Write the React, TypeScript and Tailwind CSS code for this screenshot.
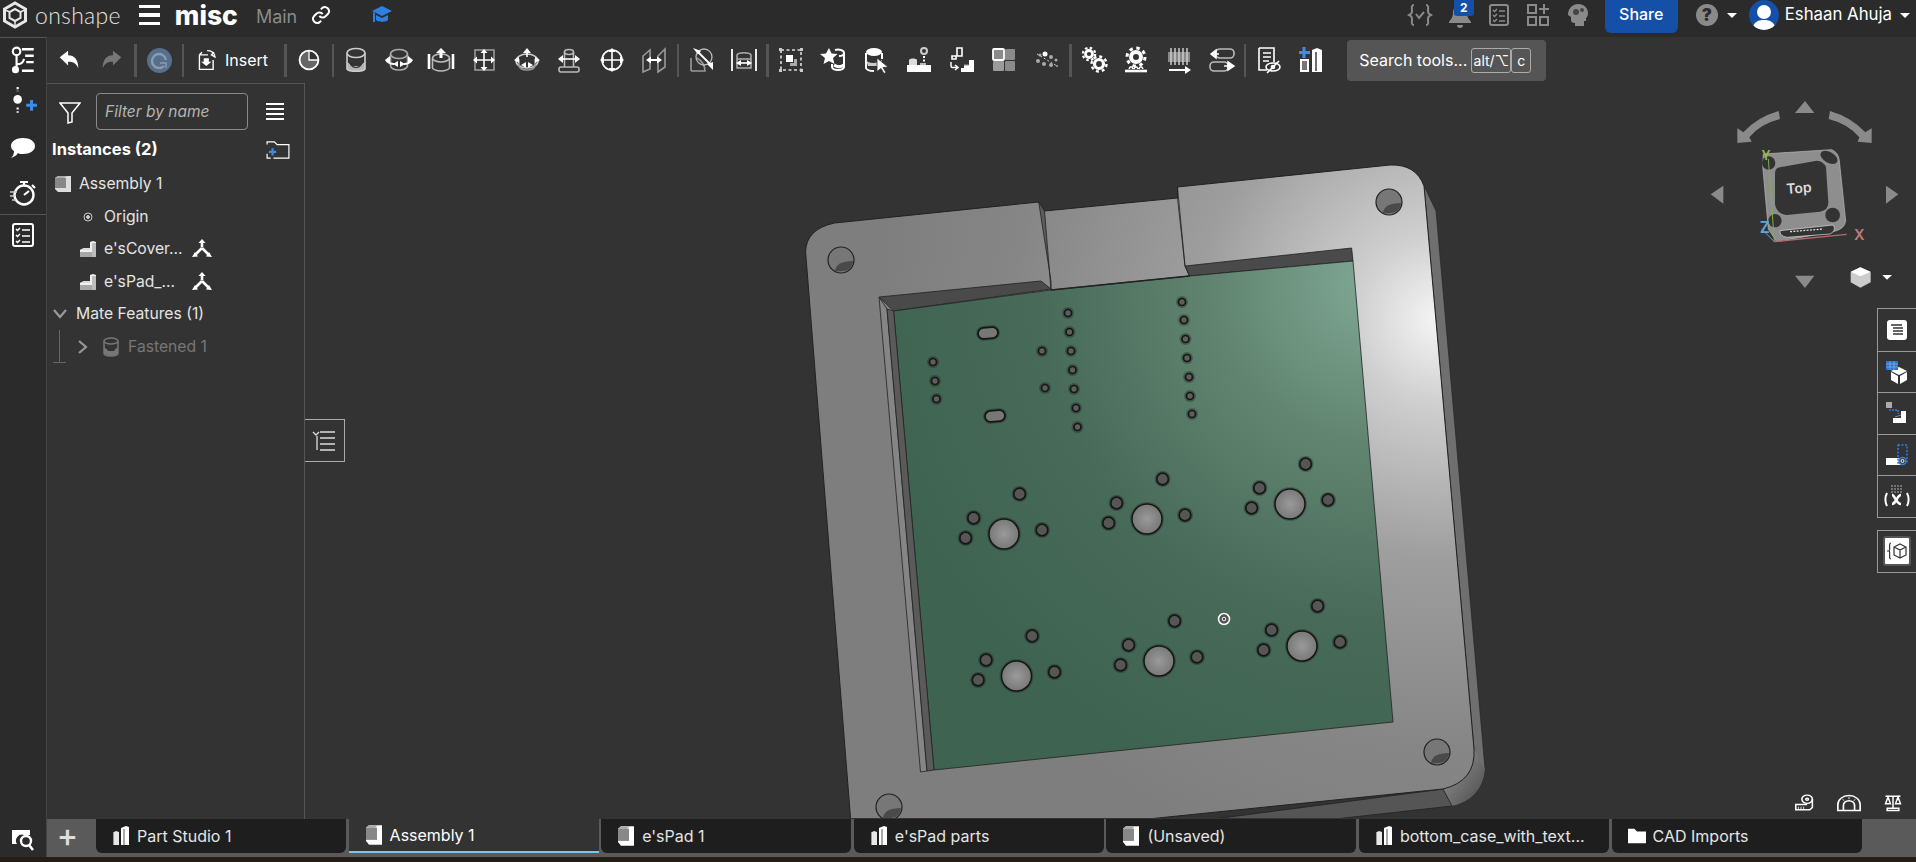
import React from "react";

const Ic = ({ children, s = 28, className = "" }: { children: React.ReactNode; s?: number; className?: string }) => (
  <svg width={s} height={s} viewBox="0 0 28 28" fill="none" stroke="white" strokeWidth="1.6" className={className}>
    {children}
  </svg>
);

const Arrows = ({ cx = 14, cy = 14, r = 9 }: { cx?: number; cy?: number; r?: number }) => (
  <g fill="white" stroke="none">
    <path d={`M${cx} ${cy - r - 2} l3.5 4 h-7z M${cx} ${cy + r + 2} l3.5 -4 h-7z M${cx - r - 2} ${cy} l4 -3.5 v7z M${cx + r + 2} ${cy} l-4 -3.5 v7z`} />
    <path d={`M${cx} ${cy - r} V${cy + r} M${cx - r} ${cy} H${cx + r}`} stroke="white" strokeWidth="1.6" />
  </g>
);

// toolbar drawings
const icons: Record<string, React.ReactNode> = {
  cyl: (
    <>
      <path d="M5 15c1 2 3 2 4 5h10c1-3 3-3 4-5v8c-2 3-16 3-18 0z" fill="#b5b5b5" stroke="none" />
      <path d="M5 15c3 1 4 3 5 5 2 2 6 2 8 0 1-2 2-4 5-5" stroke="#333" strokeWidth="1.200" />
      <ellipse cx="14" cy="7" rx="9" ry="4.500" stroke="#ccc" />
      <path d="M5 7v16c2 3 16 3 18 0V7" stroke="#ccc" />
    </>
  ),
  rev: (
    <>
      <ellipse cx="14" cy="8" rx="8.500" ry="4.500" stroke="#aaa" />
      <path d="M5.500 8v12c1 3 4 4 8.500 4s7.500-1 8.500-4V8" stroke="#aaa" />
      <path d="M1 14c2 3 5 4 8 4M27 14c-2 3-5 4-8 4" strokeWidth="1.800" />
      <path d="M0 14l5-4v8zM28 14l-5-4v8zM8 18l5-3v6zM20 18l-5-3v6z" fill="white" stroke="none" />
    </>
  ),
  sweep: (
    <>
      <ellipse cx="14" cy="12" rx="8.500" ry="4" stroke="#bbb" />
      <path d="M5.500 12v10c0 1 4 3 8.500 3s8.500-2 8.500-3V12" stroke="#bbb" />
      <path d="M14 2l5 5h-3.500v5h-3V7H9z" fill="white" stroke="none" />
      <path d="M2 8v15M26 8v15" strokeWidth="2.600" />
    </>
  ),
  move: (
    <>
      <rect x="5" y="4" width="19" height="20" stroke="#999" />
      <Arrows />
    </>
  ),
  rot: (
    <>
      <ellipse cx="14" cy="15" rx="11" ry="7" stroke="#ccc" />
      <path d="M6 13v7c1 3 5 4 8 4s7-1 8-4v-7" stroke="#999" />
      <path d="M14 2l4 5h-8zM1 14l5-3v6zM27 14l-5-3v6zM8 19l5-3v6zM20 19l-5-3v6z" fill="white" stroke="none" />
      <path d="M14 6v5" />
    </>
  ),
  shaft: (
    <>
      <ellipse cx="14" cy="6" rx="4.500" ry="2.500" stroke="#bbb" />
      <path d="M9.500 6v15M18.500 6v15" stroke="#bbb" />
      <rect x="4" y="21" width="20" height="5" rx="2" stroke="#bbb" />
      <path d="M3 13l5-4v8zM25 13l-5-4v8z" fill="white" stroke="none" />
      <path d="M8 13h12" />
    </>
  ),
  ball: (
    <>
      <circle cx="14" cy="14" r="10" />
      <Arrows r={10} />
    </>
  ),
  plane: (
    <>
      <path d="M3 10l7-6v19l-7 3zM25 3l-7 7v16l7-5z" stroke="#999" />
      <path d="M6 14l5-3.500v7zM22 14l-5-3.500v7z" fill="white" stroke="none" />
      <path d="M9 14h10" strokeWidth="2" />
    </>
  ),
  tang: (
    <>
      <path d="M3 25V12M3 25h14c0-6-3-10-8-13" stroke="#999" />
      <circle cx="16" cy="11" r="8" stroke="#bbb" strokeWidth="1.300" />
      <path d="M5 2l8 3-3 3.500zM25 24l-6-6 6-2z" fill="white" stroke="none" />
      <path d="M9 5l14 14" strokeWidth="1.800" />
    </>
  ),
  width: (
    <>
      <path d="M2 3v22M26 3v22" strokeWidth="1.800" />
      <path d="M7 9c1-3 13-3 14 0v13H7z" stroke="#aaa" />
      <path d="M7 13h14" stroke="#aaa" />
      <path d="M6 17l5-3v6zM22 17l-5-3v6z" fill="white" stroke="none" />
      <path d="M8 17h12" />
    </>
  ),
  group: (
    <>
      <rect x="4" y="4" width="20" height="20" strokeDasharray="3 2.500" stroke="#ddd" />
      <path d="M2 2h3v3H2zM23 2h3v3h-3zM2 23h3v3H2zM23 23h3v3h-3z" fill="#ccc" stroke="none" />
      <rect x="9" y="9" width="7" height="7" fill="white" stroke="none" />
      <path d="M17 13h3v7h-7v-3h4z" fill="#aaa" stroke="none" />
    </>
  ),
  star: (
    <>
      <path d="M9 2l2.500 5.500 6 .5-4.500 4 1.500 6-5.500-3-5.500 3 1.500-6L0 8l6-.5z" fill="white" stroke="none" />
      <path d="M15 4c4-1 9 0 9 3s-3 3-5 3M24 7v14c-1 4-11 4-12 0v-3" strokeWidth="2" />
      <path d="M14 19c3 2 7 2 10 0" fill="white" strokeWidth="3" />
    </>
  ),
  cylsel: (
    <>
      <ellipse cx="12" cy="6" rx="8" ry="4" fill="white" stroke="none" />
      <path d="M4 7v15c1 3 6 3 8 3M20 7v6" strokeWidth="2" />
      <path d="M4 14c2 4 12 4 16 0v4l-5 2H6z" fill="#ccc" stroke="none" />
      <path d="M15 12l11 9-5 .5 3 5-2 1-3-5-4 3z" fill="white" stroke="#333" strokeWidth=".8" />
    </>
  ),
  mate: (
    <>
      <path d="M2 19h24v7H2z" fill="white" stroke="none" />
      <path d="M4 14c1-2 7-2 8 0v5H4z" fill="#ddd" stroke="none" />
      <path d="M15 19h6v-2h-6z" fill="#bbb" stroke="none" />
      <circle cx="19" cy="5" r="3" stroke="#ccc" strokeWidth="2" />
      <path d="M19 10v6" strokeDasharray="2 1.500" strokeWidth="2" />
    </>
  ),
  parts: (
    <>
      <path d="M9 2h5v8H8v3H4v-3h5z" stroke="white" strokeWidth="1.600" />
      <path d="M3 16v4c0 1 .5 1.500 1.500 1.500H9M7 19l3 2.500-3 2.500" strokeWidth="1.500" />
      <path d="M21 14h5v12H13v-4h3v-3h5z" fill="white" stroke="none" />
      <path d="M21 19h-5" stroke="#999" strokeWidth="1" />
    </>
  ),
  grid: (
    <>
      <rect x="3" y="3" width="11" height="11" rx="1" fill="#8a8a8a" stroke="white" strokeWidth="1.800" />
      <rect x="15" y="3" width="10" height="11" rx="1" fill="#8a8a8a" stroke="none" />
      <rect x="3" y="15" width="11" height="10" rx="1" fill="#9a9a9a" stroke="none" />
      <rect x="15" y="15" width="10" height="10" rx="1" fill="#8a8a8a" stroke="none" />
    </>
  ),
  dots: (
    <g fill="#aaa" stroke="none">
      <circle cx="12" cy="8" r="2.500" fill="white" />
      <circle cx="7" cy="9" r="1.500" />
      <circle cx="18" cy="11" r="2" />
      <circle cx="23" cy="14" r="1.500" />
      <circle cx="5" cy="15" r="2" />
      <circle cx="11" cy="18" r="2" />
      <circle cx="18" cy="19" r="2" />
      <circle cx="24" cy="20" r="1" />
      <path d="M4 8l20 12" stroke="#ccc" strokeDasharray="2 2" strokeWidth="1" />
    </g>
  ),
  gears: (
    <>
      <circle cx="9" cy="8" r="3.500" strokeWidth="2.800" />
      <circle cx="9" cy="8" r="6.200" strokeWidth="2.200" strokeDasharray="2.500 2.370" />
      <circle cx="19" cy="18" r="4.500" strokeWidth="3.200" />
      <circle cx="19" cy="18" r="7.500" strokeWidth="2.400" strokeDasharray="3 2.890" />
    </>
  ),
  gearbase: (
    <>
      <circle cx="14" cy="11" r="5" strokeWidth="4" />
      <circle cx="14" cy="11" r="9" strokeWidth="3" strokeDasharray="3.500 3.570" />
      <path d="M3 25h22" strokeWidth="2.600" />
      <path d="M7 23c1-3 3-3 4 0M12 23c1-3 3-3 4 0M17 23c1-3 3-3 4 0" strokeWidth="1.500" />
    </>
  ),
  rack: (
    <>
      <rect x="3" y="6" width="22" height="10" fill="#888" stroke="none" />
      <path d="M6 2v17M10 2v17M14 2v17M18 2v17M22 2v17" stroke="#ccc" strokeWidth="1.500" />
      <path d="M4 24h17" strokeWidth="2" />
      <path d="M26 24l-6-4v8z" fill="white" stroke="none" />
    </>
  ),
  slide: (
    <>
      <rect x="8" y="3" width="18" height="9" rx="4" stroke="#bbb" />
      <rect x="2" y="16" width="18" height="9" rx="4" stroke="#bbb" />
      <path d="M3 8h8M3 8l5-4v8zM16 20h8M26 20l-6-4v8z" fill="white" stroke="white" strokeWidth="1.500" />
    </>
  ),
  report: (
    <>
      <path d="M4 2h15v14M4 2v22h8" />
      <path d="M8 7h8M8 11h8M8 15h6" />
      <ellipse cx="18" cy="21" rx="7" ry="4" />
      <circle cx="18" cy="21" r="1.500" fill="white" />
      <path d="M12 27L24 15" />
    </>
  ),
  addpart: (
    <>
      <path d="M7 1v11M2 6.500h11" stroke="#3b8de8" strokeWidth="3" />
      <path d="M3 13h9v13H3z" fill="white" stroke="none" />
      <rect x="5" y="15" width="5" height="9" fill="#777" stroke="none" />
      <path d="M15 4l5-2 5 2v22H15z" fill="white" stroke="none" />
      <path d="M19 6v19" stroke="#333" strokeWidth="1.400" />
    </>
  ),
};

const Sep = () => <div className="mx-[1px] h-[33px] w-[2.500px] shrink-0 bg-[#555]" />;

const ToolBtn = ({ name }: { name: string }) => (
  <div className="flex h-[46px] w-[42.600px] shrink-0 items-center justify-center">
    <Ic>{icons[name]}</Ic>
  </div>
);

const Toolbar = () => (
  <div className="flex h-[46px] items-center bg-[#333]">
    <div className="flex h-[46px] w-[43px] items-center justify-center">
      <Ic s={26}>
        <path d="M4 11l9-7v5c7 0 11 5 11 14-2-5-5-7-11-7v4z" fill="white" stroke="none" />
      </Ic>
    </div>
    <div className="flex h-[46px] w-[43px] items-center justify-center">
      <Ic s={26}>
        <path d="M24 11l-9-7v5C8 9 4 14 4 23c2-5 5-7 11-7v4z" fill="#777" stroke="none" />
      </Ic>
    </div>
    <Sep />
    <div className="flex h-[46px] w-[43px] items-center justify-center">
      <div className="flex h-[25px] w-[25px] items-center justify-center rounded-full bg-[#566f8d]">
        <svg width="17" height="17" viewBox="0 0 17 17" fill="none" stroke="#8c9bad" strokeWidth="2.400">
          <path d="M13 14A7 7 0 1 1 15 8" />
          <path d="M9 11h6v5" strokeWidth="1.500" />
        </svg>
      </div>
    </div>
    <Sep />
    <div className="flex h-[46px] w-[98px] items-center">
      <div className="ml-[11px] mr-[5px]">
        <Ic s={24}>
          <path d="M4 8h10M4 8v17h16V14M4 8l3-3" />
          <path d="M13 3c5 0 8 2 9 6M23 11l-5-3 3-3" strokeWidth="1.600" />
          <path d="M9 12h6v4h3l-6 5-6-5h3z" fill="white" stroke="none" />
        </Ic>
      </div>
      <span className="text-[16px] font-normal text-white">Insert</span>
    </div>
    <Sep />
    <div className="flex h-[46px] w-[43px] items-center justify-center">
      <Ic s={24}>
        <path d="M14 3A11 11 0 1 0 25 14H14z" fill="#666" stroke="none" />
        <circle cx="14" cy="14" r="11" strokeWidth="2.200" />
        <path d="M14 3v11h11" strokeWidth="1.500" />
      </Ic>
    </div>
    <Sep />
    {["cyl", "rev", "sweep", "move", "rot", "shaft", "ball", "plane"].map((n) => (
      <ToolBtn key={n} name={n} />
    ))}
    <Sep />
    {["tang", "width"].map((n) => (
      <ToolBtn key={n} name={n} />
    ))}
    <Sep />
    {["group", "star", "cylsel", "mate", "parts", "grid", "dots"].map((n) => (
      <ToolBtn key={n} name={n} />
    ))}
    <Sep />
    {["gears", "gearbase", "rack", "slide"].map((n) => (
      <ToolBtn key={n} name={n} />
    ))}
    <Sep />
    {["report", "addpart"].map((n) => (
      <ToolBtn key={n} name={n} />
    ))}
    <div className="ml-[14.600px] flex h-[41px] w-[199px] items-center rounded-[4px] bg-[#555] pl-[12px] text-[16px] text-white">
      <span>Search tools...</span>
      <span className="ml-[4px] flex h-[25px] w-[40px] items-center justify-center rounded-[3px] border border-[#aaa] text-[14px]">alt/⌥</span>
      <span className="flex h-[25px] w-[20px] items-center justify-center rounded-[3px] border border-[#aaa] text-[14px]">c</span>
    </div>
  </div>
);

const TopBar = () => (
  <div className="flex h-[37px] shrink-0 items-center bg-[#2b2b2b] pb-[7px]">
    <svg width="26" height="28" viewBox="0 0 26 28" fill="none" stroke="#e8e8e8" className="ml-[2px]">
      <path d="M13 2l10.500 6v12L13 26 2.500 20V8z" strokeWidth="3" />
      <path d="M13 8l5.500 3v6L13 20l-5.500-3v-6z" strokeWidth="2" />
      <path d="M3 9l5 2M23 9l-5 2M13 26v-6" strokeWidth="1.500" />
    </svg>
    <span className="ml-[7px] text-[23px] font-light leading-none tracking-[.3px] text-[#e2e2e2] font-[Lato,sans-serif]">onshape</span>
    <div className="ml-[18px] flex w-[21px] flex-col gap-[5px]">
      <div className="h-[3.500px] bg-white" />
      <div className="h-[3.500px] bg-white" />
      <div className="h-[3.500px] bg-white" />
    </div>
    <span className="ml-[15px] text-[26.500px] font-extrabold leading-none text-white">misc</span>
    <span className="ml-[18px] mt-[2px] text-[18px] text-[#8a8a8a]">Main</span>
    <svg width="20" height="20" viewBox="0 0 24 24" fill="none" stroke="white" strokeWidth="2.400" className="ml-[14px]">
      <path d="M10 13a5 5 0 0 0 7.500.5l3-3a5 5 0 0 0-7-7l-1.700 1.700" />
      <path d="M14 11a5 5 0 0 0-7.500-.5l-3 3a5 5 0 0 0 7 7l1.700-1.700" />
    </svg>
    <svg width="22" height="20" viewBox="0 0 22 20" fill="#2f7fe0" className="ml-[40px]">
      <path d="M11 1L1 6l10 5 10-5z" />
      <path d="M5 10v5c2 2 3 1 6 2 3-1 4 0 6-2v-5l-6 3zM2 7v10h2V8z" />
    </svg>

    <div className="ml-auto flex h-[30px] items-center">
      <svg width="26" height="26" viewBox="0 0 26 26" fill="none" stroke="#8a8a8a" strokeWidth="2">
        <path d="M7 3C4 3 5 6 5 9s-1 3-3 4c2 1 3 1 3 4s-1 6 2 6M19 3c3 0 2 3 2 6s1 3 3 4c-2 1-3 1-3 4s1 6-2 6" />
        <path d="M9 12l3 4 5-6" />
      </svg>
      <div className="relative ml-[14px] h-[26px] w-[26px]">
        <svg width="26" height="26" viewBox="0 0 26 26" fill="#8a8a8a">
          <path d="M13 3c-5 0-7 4-7 8 0 5-3 7-4 9v1h22v-1c-1-2-4-4-4-9 0-4-2-8-7-8zM10 23a3 3 0 0 0 6 0z" />
        </svg>
        <div className="absolute -top-[2px] left-[7px] flex h-[16px] w-[20px] items-center justify-center rounded-b-[3px] bg-[#1450a8] text-[12px] font-bold leading-none text-white">2</div>
      </div>
      <svg width="24" height="24" viewBox="0 0 24 24" fill="none" stroke="#8a8a8a" strokeWidth="2" className="ml-[14px]">
        <rect x="3" y="2" width="18" height="20" rx="2" />
        <path d="M6 7l1.500 1.500L10 6M6 12l1.500 1.500L10 11M6 17l1.500 1.500L10 16M12 8h6M12 13h6M12 18h6" strokeWidth="1.500" />
      </svg>
      <svg width="24" height="24" viewBox="0 0 24 24" fill="none" stroke="#8a8a8a" strokeWidth="2" className="ml-[15px]">
        <rect x="2" y="2" width="8" height="8" />
        <rect x="2" y="14" width="8" height="8" />
        <rect x="14" y="14" width="8" height="8" />
        <path d="M18 1v10M13 6h10" />
      </svg>
      <svg width="22" height="24" viewBox="0 0 22 24" fill="#8a8a8a" className="ml-[17px]">
        <path d="M11 1c6 0 10 4 10 9 0 3-1 4-2 5v3h-2v5H8v-3c-3 0-4-1-4-3v-3L1 12C1 6 5 1 11 1z" />
        <circle cx="9" cy="9" r="3" fill="#444" />
        <circle cx="15" cy="7" r="2" fill="#444" />
      </svg>
      <div className="ml-[16px] flex h-[33px] w-[73px] items-center justify-center self-start rounded-b-[6px] bg-[#1450a8] pb-[6px] text-[16px] font-medium text-white">Share</div>
      <div className="ml-[18px] flex h-[22px] w-[22px] items-center justify-center rounded-full bg-[#8a8a8a] text-[17px] font-black leading-none text-[#2b2b2b]">?</div>
      <div className="ml-[9px] h-0 w-0 border-x-[5px] border-t-[5px] border-x-transparent border-t-white" />
      <div className="relative ml-[12px] h-[30px] w-[30px] overflow-hidden rounded-full bg-[#1450a8]">
        <div className="absolute left-[8px] top-[5px] h-[14px] w-[14px] rounded-full bg-white" />
        <div className="absolute left-[3px] top-[20px] h-[14px] w-[24px] rounded-t-[10px] bg-white" />
      </div>
      <span className="ml-[6px] text-[16.800px] font-normal text-white">Eshaan Ahuja</span>
      <div className="ml-[8px] mr-[6px] h-0 w-0 border-x-[5px] border-t-[5px] border-x-transparent border-t-white" />
    </div>
  </div>
);

const Rail = () => (
  <div className="flex w-[46px] shrink-0 flex-col items-center border-t border-[#555] bg-[#2b2b2b]">
    <div className="mt-[7px] h-[28px]">
      <Ic s={30}>
        <circle cx="8" cy="6" r="3.500" strokeWidth="2" />
        <circle cx="7" cy="23" r="2.500" fill="white" />
        <path d="M8 10v11M8 18c4 0 6-1 7-5" strokeWidth="2" />
        <path d="M13 4h11M16 10h8M17 16h7M13 24h11" strokeWidth="2.200" />
      </Ic>
    </div>
    <div className="mt-[13px] h-[30px]">
      <Ic s={30}>
        <path d="M9 1v4M9 20v5" strokeWidth="2" strokeDasharray="2 1.500" />
        <circle cx="9" cy="12.500" r="4" fill="white" stroke="none" />
        <path d="M22 13v10M17 18h10" stroke="#3b8de8" strokeWidth="2.800" />
      </Ic>
    </div>
    <div className="mt-[19px] h-[28px]">
      <svg width="26" height="26" viewBox="0 0 26 26" fill="white">
        <path d="M13 3c7 0 12 3.500 12 8s-5 8-12 8c-2 0-4 0-5-1-1 2-4 4-7 5 2-2 3-4 3-7-2-1-3-3-3-5 0-4.500 5-8 12-8z" />
      </svg>
    </div>
    <div className="mt-[16px] h-[28px]">
      <Ic s={28}>
        <circle cx="15" cy="16" r="9.500" strokeWidth="2.400" />
        <path d="M11 3h8M15 3v3M23 6l3 3M15 16l5-4" strokeWidth="2.200" />
        <path d="M1 13h7M1 17h5M3 21h4" stroke="#ccc" strokeWidth="1.600" />
      </Ic>
    </div>
    <div className="mt-[7px] h-px w-full bg-[#555]" />
    <div className="mt-[7px] h-[28px]">
      <svg width="24" height="26" viewBox="0 0 24 26" fill="none" stroke="white" strokeWidth="2">
        <rect x="2" y="2" width="20" height="22" rx="2" />
        <path d="M5 7l1.500 1.500L9 6M5 13l1.500 1.500L9 12M5 19l1.500 1.500L9 18M11 8h8M11 14h8M11 20h8" strokeWidth="1.500" />
      </svg>
    </div>
    <div className="mt-auto mb-[5px]">
      <svg width="28" height="26" viewBox="0 0 28 26" fill="none" stroke="white">
        <path d="M3 4h18v5h-6a6 6 0 0 0-7 9H3z" fill="white" stroke="none" />
        <circle cx="17" cy="15" r="5" strokeWidth="2.400" />
        <path d="M20 19l4 5" strokeWidth="2.600" />
      </svg>
    </div>
  </div>
);

// tab icon: two upright bars
const PartIc = () => (
  <svg width="18" height="22" viewBox="0 0 18 22" stroke="none">
    <path d="M9 3l5-2 3 1v18H9z" fill="white" />
    <path d="M12 4v16" stroke="#555" strokeWidth="1" />
    <path d="M2 7l2-1 3 1v13H2z" fill="#e8e8e8" />
    <path d="M1 7h1v13H1z" fill="#999" />
  </svg>
);

// tree icon: L shaped part
const LPartIc = () => (
  <svg width="18" height="18" viewBox="0 0 18 18" stroke="none">
    <path d="M11 2l3-1 3 1v15H1V10l4-2h6z" fill="#f0f0f0" />
    <path d="M13 3h4v14h-4z" fill="#bdbdbd" />
    <path d="M1 12h12v5H1z" fill="#a8a8a8" />
    <path d="M5 8h6v2H1z" fill="#dcdcdc" />
  </svg>
);

const AsmIc = ({ color = "#ddd", h = 18 }: { color?: string; h?: number }) => (
  <svg width="18" height={h} viewBox="0 0 18 18" stroke="none" preserveAspectRatio="none">
    <path d="M4 1h13v16H4L1 14V3z" fill={color} />
    <path d="M1 3l3-2h9l-3 2z" fill="#aaa" />
    <rect x="1" y="3" width="11" height="10" fill="#888" />
  </svg>
);

const Row = ({ pl, children }: { pl: number; children: React.ReactNode }) => (
  <div className="flex h-[32.500px] items-center text-[15.700px] text-[#e4e4e4]" style={{ paddingLeft: pl }}>
    {children}
  </div>
);

const MateIc = () => (
  <svg width="22" height="22" viewBox="0 0 22 22" fill="white" stroke="white" className="ml-[12px]">
    <path d="M11 9V3M11 10l-7 7M11 10l7 7" strokeWidth="2.600" fill="none" />
    <path d="M11 1l3.500 4h-7zM1 19l6-.5-3-4.500zM21 19l-6-.5 3-4.500z" stroke="none" />
  </svg>
);

const Panel = () => (
  <div className="relative flex w-[258px] shrink-0 flex-col border-t border-r border-[#555] bg-[#333]">
    <div className="mt-[9px] flex h-[37px] items-center">
      <svg width="22" height="24" viewBox="0 0 22 24" fill="none" stroke="white" strokeWidth="1.500" className="ml-[12px]">
        <path d="M1 3h20l-8 10v9l-4 1V13z" />
      </svg>
      <div className="ml-[15px] flex h-[37px] w-[152px] items-center rounded-[4px] border border-[#8a8a8a] pl-[8px] text-[15.500px] italic text-[#b5b5b5]">Filter by name</div>
      <div className="ml-[18px] flex w-[18px] flex-col gap-[2.500px]">
        <div className="h-[2.500px] bg-white" />
        <div className="h-[2.500px] bg-white" />
        <div className="h-[2.500px] bg-white" />
        <div className="h-[2.500px] bg-white" />
      </div>
    </div>
    <div className="mt-[4px] flex h-[30px] items-center pl-[5px] text-[16.500px] font-bold text-white">
      <span>Instances (2)</span>
      <svg width="24" height="20" viewBox="0 0 26 22" fill="none" stroke="white" strokeWidth="1.300" className="ml-[108px] mt-[2px]">
        <path d="M1 5V2h8l3 3h13v15H8M1 15v5h4" />
        <path d="M7 9v8M3 13h8" stroke="#3b8de8" strokeWidth="2.400" />
      </svg>
    </div>
    <div className="mt-[4px]">
      <Row pl={7}>
        <AsmIc />
        <span className="ml-[7px]">Assembly 1</span>
      </Row>
      <Row pl={36}>
        <svg width="10" height="10" viewBox="0 0 10 10" fill="none" stroke="#ccc">
          <circle cx="5" cy="5" r="4" />
          <circle cx="5" cy="5" r="1.500" fill="#ccc" />
        </svg>
        <span className="ml-[11px]">Origin</span>
      </Row>
      {["e'sCover...", "e'sPad_..."].map((n) => (
        <Row pl={32} key={n}>
          <LPartIc />
          <span className="ml-[7px] w-[75px]">{n}</span>
          <MateIc />
        </Row>
      ))}
      <Row pl={5}>
        <svg width="16" height="10" viewBox="0 0 16 10" fill="none" stroke="#999" strokeWidth="2.200">
          <path d="M2 1l6 7 6-7" />
        </svg>
        <span className="ml-[8px]">Mate Features (1)</span>
      </Row>
      <Row pl={31}>
        <svg width="10" height="16" viewBox="0 0 10 16" fill="none" stroke="#999" strokeWidth="2.200">
          <path d="M1 2l7 6-7 6" />
        </svg>
        <svg width="18" height="20" viewBox="0 0 18 20" fill="none" stroke="#777" strokeWidth="1.500" className="ml-[14px]">
          <ellipse cx="9" cy="4" rx="7" ry="3" />
          <path d="M2 4v12c0 2 3 3 7 3s7-1 7-3V4" />
          <path d="M2 10c2 2 3 2 4 4h6c1-2 2-2 4-4v7l-7 2-7-2z" fill="#777" stroke="none" />
        </svg>
        <span className="ml-[8px] text-[#777]">Fastened 1</span>
      </Row>
    </div>
    <div className="absolute left-[12px] top-[246px] h-[32px] w-px bg-[#666]" />
    <div className="absolute left-[6px] top-[278px] h-px w-[13px] bg-[#666]" />
  </div>
);

const sideCell = "flex h-[41.500px] items-center justify-center";

const SidePanel = () => (
  <div className="absolute right-0 top-[225px] w-[39px]">
    <div className="border-y border-l border-[#999]">
      <div className={sideCell}>
        <svg width="20" height="20" viewBox="0 0 20 20" stroke="#333">
          <rect width="20" height="20" rx="3" fill="white" stroke="none" />
          <path d="M4 5h11M6 8h10M6 11h10M6 14h10" strokeWidth="1.500" fill="none" />
        </svg>
      </div>
      <div className={`${sideCell} border-t border-[#999]`}>
        <svg width="24" height="24" viewBox="0 0 24 24" fill="white">
          <path d="M14 7l8 4-8 4-8-4zM6 12l7 4v8l-7-4zM22 12l-7 4v8l7-4z" />
          <rect x="1" y="1" width="12" height="9" fill="#2f6fd0" />
          <path d="M1 4h12M1 7h12M5 1v9M9 1v9" stroke="#9cc" strokeWidth=".6" />
        </svg>
      </div>
      <div className={`${sideCell} border-t border-[#999]`}>
        <svg width="24" height="24" viewBox="0 0 24 24" fill="none">
          <rect x="1" y="1" width="6" height="6" fill="#aaa" />
          <path d="M4 9h9v4" stroke="#2f7fe0" strokeWidth="1.500" strokeDasharray="2 1" />
          <path d="M16 10h5v12H8v-5h8z" fill="white" />
          <path d="M10 16l6-2" stroke="#888" />
        </svg>
      </div>
      <div className={`${sideCell} border-t border-[#999]`}>
        <svg width="24" height="24" viewBox="0 0 24 24" fill="none">
          <rect x="1" y="15" width="15" height="7" fill="white" />
          <rect x="13" y="2" width="9" height="18" stroke="#2f7fe0" strokeDasharray="2 1.500" strokeWidth="1.500" />
          <circle cx="17.500" cy="18" r="3.500" stroke="#2f7fe0" strokeWidth="1.500" fill="#333" />
          <circle cx="17.500" cy="18" r="1.500" stroke="white" />
        </svg>
      </div>
      <div className={`${sideCell} border-t border-[#999]`}>
        <svg width="26" height="24" viewBox="0 0 26 24" fill="none" stroke="white">
          <path d="M3 9c-2 4-2 9 0 13M23 9c2 4 2 9 0 13" strokeWidth="2" />
          <path d="M8 11c3 0 4 9 9 9M17 11c-4 0-5 9-9 9" strokeWidth="2.600" />
          <path d="M7 2h12M7 5h12M7 8h12" stroke="#888" strokeWidth="1.600" strokeDasharray="2 1" />
        </svg>
      </div>
    </div>
    <div className="mt-[12px] flex h-[43px] items-center justify-center border-y border-l border-[#999]">
      <div className="flex h-[30px] w-[28px] items-center justify-center rounded-[3px] border-2 border-[#555] bg-white">
        <svg width="22" height="22" viewBox="0 0 22 22" fill="none" stroke="#333" strokeWidth="1.200">
          <path d="M14 4l6 3v8l-6 3-6-3V7zM8 7l6 3 6-3M14 10v8" />
          <path d="M5 3C2 3 5 10 3 11c2 1-1 8 2 8M1 11h3" />
        </svg>
      </div>
    </div>
  </div>
);

const big = [
  [1004, 535],
  [1147, 520],
  [1290, 505],
  [1016.5, 677],
  [1159, 662],
  [1302, 647],
];
const off = [
  [15.6, -40],
  [-30.4, -16],
  [-38.4, 4],
  [38, -4],
];
const tiny = [
  [933, 363], [935, 382], [936.5, 400], [1042, 352], [1045, 389],
  [1068, 314], [1069.5, 333], [1071, 352], [1072.5, 371], [1074, 390], [1076, 409], [1077.5, 428],
  [1182, 303], [1184, 321], [1185.5, 340], [1187, 359], [1189, 378], [1190, 397], [1192, 415],
];
const corners = [
  [841, 261],
  [1389, 203],
  [1437, 753],
  [889, 808],
];

const Model = () => (
  <svg width="1611" height="735" viewBox="305 84 1611 735" className="absolute left-0 top-0">
    <defs>
      <radialGradient id="fr" gradientUnits="userSpaceOnUse" cx="1440" cy="320" r="570">
        <stop offset="0" stopColor="#f6f6f6" />
        <stop offset=".15" stopColor="#cfcfcf" />
        <stop offset=".42" stopColor="#9e9e9e" />
        <stop offset=".75" stopColor="#868686" />
        <stop offset="1" stopColor="#7e7e7e" />
      </radialGradient>
      <radialGradient id="gr" gradientUnits="userSpaceOnUse" cx="1375" cy="285" r="520">
        <stop offset="0" stopColor="#80a895" />
        <stop offset=".3" stopColor="#618571" />
        <stop offset=".65" stopColor="#476b58" />
        <stop offset="1" stopColor="#3f6351" />
      </radialGradient>
      <radialGradient id="bh" cx=".5" cy=".5" r=".6">
        <stop offset="0" stopColor="#9a9a9a" />
        <stop offset="1" stopColor="#727272" />
      </radialGradient>
      <linearGradient id="cr" x1="0" y1="0" x2="1" y2="1">
        <stop offset="0" stopColor="#999" />
        <stop offset="1" stopColor="#4a4a4a" />
      </linearGradient>
    </defs>
    {/* side faces */}
    <path d="M1424 187L1436 212 1485 770Q1482 800 1452 807L1443 790Q1476 782 1474 750z" fill="#6f6f6f" stroke="#222" strokeWidth=".6" />
    <path d="M1474 750Q1476 782 1443 790L1452 807Q1482 800 1485 770z" fill="url(#cr)" />
    <path d="M1443 790L1452 807 1200 835 1100 835z" fill="#555" stroke="#222" strokeWidth=".8" />
    {/* top face */}
    <path
      d="M805.600 253Q806 230 834.600 224L1038.700 203 1044.500 212 1177.500 199 1177.500 188 1390 166Q1416 165 1424 187L1474 750Q1476 782 1443 790L853 850z"
      fill="url(#fr)"
      stroke="#222"
      strokeWidth="1"
    />
    {/* window */}
    <path d="M879 298L1041 282 1051 290 893.600 312z" fill="#4a4a4a" stroke="#222" strokeWidth=".8" />
    <path d="M1185 267L1351.600 249 1353 262 1189.500 277z" fill="#4a4a4a" stroke="#222" strokeWidth=".8" />
    <path d="M893.600 312L1051 291 1189.500 277 1353 262 1393 723 934 771z" fill="url(#gr)" stroke="#222" strokeWidth=".8" />
    <path d="M879 298L887 310 927 772 920.500 773z" fill="#858585" stroke="#222" strokeWidth=".8" />
    <path d="M887 310L893.600 312 934 771 927 772z" fill="#5a5a5a" stroke="#222" strokeWidth=".8" />
    {/* notch */}
    <path d="M1038.700 203L1044.500 212 1051 291 1051 282z" fill="#5c5c5c" stroke="#222" strokeWidth=".8" />
    <path d="M1177.500 188L1185 267 1189.500 277M1177.500 199L1185 267" fill="none" stroke="#222" strokeWidth=".8" />
    <path d="M1051 291L1189.500 277" fill="none" stroke="#222" strokeWidth="1.400" />
    {/* corner holes */}
    {corners.map(([x, y]) => (
      <g key={x}>
        <circle cx={x} cy={y} r="13" fill="#777" stroke="#222" strokeWidth="1.200" />
        <path d={`M${x - 6} ${y + 11}Q${x - 5} ${y + 1} ${x + 12} ${y + 1}Q${x + 11} ${y + 13} ${x - 6} ${y + 11}z`} fill="#4a4a4a" />
      </g>
    ))}
    {/* pcb holes, each with a soft dark halo */}
    {tiny.map(([x, y]) => (
      <g key={`${x}-${y}`}>
        <circle cx={x} cy={y} r="6" fill="#111" opacity=".3" />
        <circle cx={x} cy={y} r="3.500" fill="#5e5e5e" stroke="#161616" strokeWidth="1.700" />
      </g>
    ))}
    {[
      [988, 334],
      [995, 417],
    ].map(([x, y]) => (
      <g key={x} transform={`rotate(-5 ${x} ${y})`}>
        <rect x={x - 12} y={y - 7.500} width="24" height="15" rx="7.500" fill="#111" opacity=".3" />
        <rect x={x - 10} y={y - 5.500} width="20" height="11" rx="5.500" fill="#777" stroke="#161616" strokeWidth="1.800" />
      </g>
    ))}
    {big.map(([x, y]) => (
      <g key={x}>
        <circle cx={x} cy={y} r="17" fill="#111" opacity=".25" />
        <circle cx={x} cy={y} r="15" fill="url(#bh)" stroke="#161616" strokeWidth="1.500" />
        {off.map(([a, b]) => (
          <g key={a}>
            <circle cx={x + a} cy={y + b} r="8" fill="#111" opacity=".3" />
            <circle cx={x + a} cy={y + b} r="5.800" fill="#565656" stroke="#161616" strokeWidth="1.700" />
          </g>
        ))}
      </g>
    ))}
    <circle cx="1224" cy="620" r="5.500" fill="#555" stroke="white" strokeWidth="1.500" />
    <circle cx="1224" cy="620" r="1.800" fill="none" stroke="#eee" />
  </svg>
);

const NavCube = () => (
  <svg width="236" height="210" viewBox="0 0 708 630" className="absolute right-0 top-[6px]">
    <g fill="#8a8a8a">
      <path d="M345 72L375 36 403 72zM92 316L130 290V344zM655 316L618 290V344zM345 560H403L375 597z" />
      <path d="M296 66L300 90Q240 105 208 145L215 158 172 162 172 118 190 130Q230 85 296 66z" />
      <path d="M450 66L446 90Q505 105 538 145L533 158 575 162V118L556 130Q515 85 450 66z" />
    </g>
    <path d="M250 195L455 182Q475 190 478 215L497 395Q495 420 460 428L290 458 265 420 248 230z" fill="#8e8e8e" stroke="#bbb" strokeWidth="2" />
    <path d="M300 235Q285 235 285 255L285 345Q290 375 320 378L420 368Q445 365 445 340L438 235Q430 215 410 215z" fill="#333" />
    <circle cx="266" cy="222" r="20" fill="#333" />
    <ellipse cx="447" cy="205" rx="28" ry="16" fill="#333" transform="rotate(30 447 205)" />
    <circle cx="285" cy="395" r="20" fill="#333" />
    <circle cx="458" cy="378" r="22" fill="#333" />
    <path d="M300 425L460 408Q470 425 450 435L320 445Q298 440 300 425z" fill="#333" stroke="#ddd" strokeWidth="2" />
    <path d="M330 428L430 420" stroke="#ddd" strokeWidth="4" strokeDasharray="6 4" />
    <text x="358" y="312" fill="#ddd" fontSize="42" fontWeight="600" textAnchor="middle" transform="rotate(-5 358 312)">Top</text>
    <path d="M265 210L283 458" stroke="#7fb04f" strokeWidth="3" />
    <path d="M283 458L500 436" stroke="#b06a6a" strokeWidth="4" />
    <path d="M283 458L245 420" stroke="#5fa8d8" strokeWidth="3" />
    <text x="258" y="212" fill="#8fbf4f" fontSize="38" fontWeight="600" textAnchor="middle">Y</text>
    <text x="254" y="432" fill="#5fa8d8" fontSize="46" fontWeight="600" textAnchor="middle">Z</text>
    <text x="538" y="452" fill="#c07a7a" fontSize="44" fontWeight="600" textAnchor="middle">X</text>
    <path d="M541 535L572 550V580L541 596 512 580V550z" fill="#ccc" />
    <path d="M541 535L572 548 541 562 512 548z" fill="white" />
    <path d="M607 558H636L621 572z" fill="white" />
  </svg>
);

const BottomTools = () => (
  <div className="absolute bottom-[7px] right-[13px] flex items-center gap-[21px]">
    <svg width="21" height="18" viewBox="0 0 24 24" fill="none" stroke="white" strokeWidth="1.800" preserveAspectRatio="none">
      <ellipse cx="15" cy="7" rx="6" ry="5.500" />
      <circle cx="15" cy="7" r="1.500" />
      <path d="M21 7v11l-3 3H2v-7h13" />
      <path d="M5 17v4M8 17v4M11 17v4" strokeWidth="1" />
    </svg>
    <svg width="26" height="18" viewBox="0 0 28 24" fill="none" stroke="white" strokeWidth="1.800" preserveAspectRatio="none">
      <path d="M2 22V14a12 12 0 0 1 24 0v8z" />
      <path d="M8 22v-7a6 6 0 0 1 12 0v7" />
      <path d="M14 4v3M7 7l2 2M21 7l-2 2" strokeWidth="1" />
    </svg>
    <svg width="20" height="18" viewBox="0 0 24 24" fill="none" stroke="white" strokeWidth="1.800" preserveAspectRatio="none">
      <path d="M3 3h18M12 3v15M5 19h14v3H5z" />
      <path d="M6 4L3 13h6zM18 4l-3 9h6z" />
    </svg>
  </div>
);

const Tab = ({ label, icon, active }: { label: string; icon: React.ReactNode; active?: boolean }) => (
  <div
    className={
      active
        ? "flex h-[34px] w-[250px] shrink-0 items-center border-b-2 border-[#7fc4ef] bg-[#333] pl-[16px] text-[16px] text-white"
        : "flex h-[34px] w-[250px] shrink-0 items-center rounded-b-[6px] bg-[#1e1e1e] pl-[16px] text-[16px] text-[#e4e4e4]"
    }
  >
    <span className="mr-[7px] flex w-[18px] justify-center">{icon}</span>
    {label}
  </div>
);

const FolderIc = () => (
  <svg width="20" height="16" viewBox="0 0 20 16" fill="white">
    <path d="M0 0h7l3 3h10v13H0z" />
  </svg>
);

export default function App() {
  return (
    <div className="flex h-[862px] w-[1916px] flex-col overflow-hidden bg-[#2a1f1a] font-[Inter,sans-serif]">
      <TopBar />
      <div className="flex h-[820px] shrink-0">
        <Rail />
        <div className="flex w-[1870px] flex-col border-l border-[#444]">
          <Toolbar />
          <div className="flex flex-1">
            <Panel />
            <div className="relative flex-1 overflow-hidden bg-[#333]">
              <Model />
              <NavCube />
              <SidePanel />
              <BottomTools />
              <div className="absolute -left-[2px] top-[336px] flex h-[43px] w-[42px] items-center justify-center border border-l-0 border-[#aaa] bg-[#333]">
                <svg width="24" height="22" viewBox="0 0 24 22" fill="none" stroke="#ddd" strokeWidth="1.300">
                  <path d="M1 2l3 3 3-3M5 6v14M8 2h15M8 8h15M8 14h15M8 20h15" />
                </svg>
              </div>
            </div>
          </div>
          <div className="flex h-[38px] shrink-0 bg-[#5a5a5a]">
            <div className="flex h-[34px] w-[49px] items-center justify-center pr-[8px] text-[32px] font-medium leading-none text-[#ddd]">+</div>
            <div className="flex h-[34px] gap-[2.600px]">
              <Tab label="Part Studio 1" icon={<PartIc />} />
              <Tab label="Assembly 1" icon={<AsmIc color="white" h={22} />} active />
              <Tab label="e'sPad 1" icon={<AsmIc color="white" h={22} />} />
              <Tab label="e'sPad parts" icon={<PartIc />} />
              <Tab label="(Unsaved)" icon={<AsmIc color="white" h={22} />} />
              <Tab label="bottom_case_with_text..." icon={<PartIc />} />
              <Tab label="CAD Imports" icon={<FolderIc />} />
            </div>
          </div>
        </div>
      </div>
      <div className="flex-1 bg-[#241d18]" />
    </div>
  );
}
